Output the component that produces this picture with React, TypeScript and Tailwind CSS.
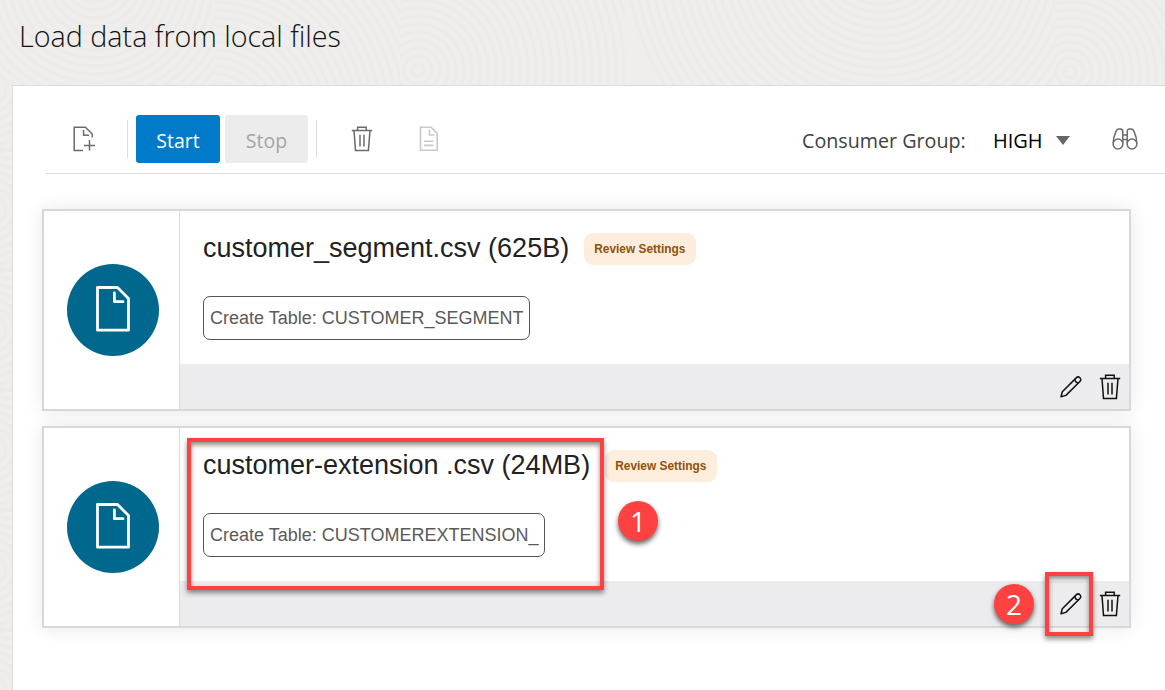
import React from "react";

const ui = "font-['Open_Sans','Noto_Sans',sans-serif]";
const arial = "font-['Liberation_Sans',Arial,sans-serif]";

const rings = [6, 14, 22, 30, 38, 46, 54, 62, 70, 78, 86, 94, 102, 110, 118, 126];

function Texture() {
  const groups = [
    { x: 0, y: 0, w: 215, cx: 95, cy: -20 },
    { x: 215, y: 0, w: 185, cx: 215, cy: 120 },
    { x: 400, y: 0, w: 225, cx: 418, cy: 70 },
    { x: 625, y: 0, w: 430, cx: 880, cy: -50 },
    { x: 1055, y: 0, w: 110, cx: 1070, cy: 72 },
  ];
  return (
    <svg className="absolute inset-0 h-[690px] w-[1165px]" viewBox="0 0 1165 690" fill="none" aria-hidden="true">
      <defs>
        {groups.map((g, i) => (
          <clipPath id={`tile${i}`} key={i}>
            <rect x={g.x} y={g.y} width={g.w} height={85} />
          </clipPath>
        ))}
        <clipPath id="edge">
          <rect x="0" y="85" width="12" height="605" />
        </clipPath>
      </defs>
      {groups.map((g, i) => (
        <g key={i} clipPath={`url(#tile${i})`} stroke="#ecebe9" strokeWidth="3">
          {[...rings, ...rings.map((r) => r + 128)].map((r) => (
            <circle key={r} cx={g.cx} cy={g.cy} r={r} />
          ))}
        </g>
      ))}
      <g clipPath="url(#edge)" stroke="#ecebe9" strokeWidth="3">
        {[90, 210, 330, 450, 570, 690].map((cy) =>
          rings.slice(0, 8).map((r) => <circle key={`${cy}-${r}`} cx="-8" cy={cy} r={r} />)
        )}
      </g>
    </svg>
  );
}

function AddFileIcon() {
  return (
    <svg className="h-[26px] w-[24px]" viewBox="0 0 24 26" fill="none" stroke="#6b6b6b" strokeWidth="1.5">
      <path d="M11 24.5H2.2V1.2H13.4L20.2 8V11.5" />
      <path d="M11.6 4V9.3H17" />
      <path d="M17.5 14V24.6M12 19.4H23" />
    </svg>
  );
}

function TrashIcon({ color }: { color: string }) {
  return (
    <svg className="h-[26px] w-[22px]" viewBox="0 0 22 26" fill="none" stroke={color} strokeWidth="1.5">
      <path d="M0.8 4.5H21.2" />
      <path d="M6.6 4.5V1.3H15.2V4.5" />
      <path d="M3 4.5L4.5 24.4H17.4L19 4.5" />
      <path d="M9 8.8V20.5M13 8.8V20.5" />
    </svg>
  );
}

function LogIcon() {
  return (
    <svg className="h-[26px] w-[20px]" viewBox="0 0 20 26" fill="none" stroke="#c8c8c8" strokeWidth="1.6">
      <path d="M1.5 1.2H12L18.2 7.4V24.3H1.5Z" />
      <path d="M10.4 3.8V9H15.4" />
      <path d="M5 15.3H14.4M5 19.4H14.4" />
    </svg>
  );
}

function BinocularsIcon() {
  return (
    <svg className="h-[22px] w-[26px]" viewBox="0 0 26 22" fill="none" stroke="#6b6b6b" strokeWidth="1.5">
      <circle cx="6" cy="16" r="4.9" />
      <circle cx="20" cy="16" r="4.9" />
      <path d="M1.2 15C1.2 12 2.8 6 4.1 3.1C4.8 1.5 5.5 1.1 6.8 1.1H8.3C10.1 1.1 10.8 2 10.8 3.6V15.2" />
      <path d="M24.8 15C24.8 12 23.2 6 21.9 3.1C21.2 1.5 20.5 1.1 19.2 1.1H17.7C15.9 1.1 15.2 2 15.2 3.6V15.2" />
      <path d="M10.8 7.1H15.2M10.8 11.6H15.2" />
    </svg>
  );
}

function PencilIcon() {
  return (
    <svg className="h-[22px] w-[22px]" viewBox="0 0 22 22" fill="none" stroke="#111" strokeWidth="1.5" strokeLinejoin="round">
      <path d="M1 20.8L2.3 15.8L16.2 1.9C17.3 0.8 18.8 0.7 19.9 1.7C21.1 2.9 21 4.4 19.9 5.5L5.9 19.4Z" />
      <path d="M15 3.2C15 5.4 16.5 6.8 18.7 6.8" />
    </svg>
  );
}

function DocIcon() {
  return (
    <svg className="-mt-0.5 h-[46px] w-[34px]" viewBox="0 0 34 46" fill="none" stroke="#fff" strokeWidth="2.8" strokeLinejoin="round" strokeLinecap="round">
      <path d="M1.5 1.5H21.5L32.5 12.5V44.2H1.5Z" />
      <path d="M18.4 7V15.7H27" />
    </svg>
  );
}

function FileCard({ title, titleClass, table, tableClass }: { title: string; titleClass: string; table: string; tableClass: string }) {
  return (
    <article className={`flex h-[202px] w-[1089px] border-2 border-[#d8d8d9] bg-white shadow-[0_0_18px_rgba(0,0,0,0.09)] ${arial}`}>
      <div className="flex w-[136px] shrink-0 items-center justify-center border-r border-[#dcdcdd] pl-[3px]">
        <div className="flex size-[92px] items-center justify-center rounded-full bg-[#00688c]">
          <DocIcon />
        </div>
      </div>
      <div className="flex min-w-0 flex-1 flex-col">
        <div className="flex flex-1 flex-col items-start pt-[22px] pl-[23px]">
          <div className="flex h-8 items-center">
            <h2 className={`${titleClass} -mt-0.5 text-[27px] leading-8 whitespace-nowrap text-[#222]`}>{title}</h2>
            <span className="flex h-8 w-[112px] items-center justify-center rounded-[9px] bg-[#fdeddc]">
              <span className="scale-x-[0.88] text-[13.5px] leading-4 font-bold whitespace-nowrap text-[#8f520a]">Review Settings</span>
            </span>
          </div>
          <div className={`${tableClass} mt-[31px] flex h-[44px] items-center rounded-[7px] border border-[#555] pl-[6px] text-[18px] whitespace-nowrap text-[#5a5a5a]`}>
            {table}
          </div>
        </div>
        <div className="flex h-[45px] items-center justify-end gap-[17px] bg-[#ececee] pr-[8px]">
          <button aria-label="Edit"><PencilIcon /></button>
          <button aria-label="Delete"><TrashIcon color="#111" /></button>
        </div>
      </div>
    </article>
  );
}

export default function App() {
  return (
    <div className={`relative h-[690px] w-[1165px] overflow-hidden bg-[#efeeec] ${ui}`}>
      <Texture />
      <div className="relative flex h-full flex-col">
        <header className="flex h-[85px] shrink-0 pt-[16px] pl-[19px]">
          <h1 className="h-10 text-[28.7px] leading-10 font-light whitespace-nowrap text-[#111]">Load data from local files</h1>
        </header>
        <main className="ml-3 flex-1 border-t border-l border-[#dcdcdb] bg-white">
          <div className="ml-8 flex h-[88px] items-center border-b border-[#dedede] pt-[18px]">
            <div className="flex h-12 w-full items-center">
              <button className="ml-[27px] w-6" aria-label="Add file"><AddFileIcon /></button>
              <span className="ml-[31px] h-[38px] w-px bg-[#dedede]" />
              <button className="ml-2 h-12 w-[84px] rounded-[3px] bg-[#007ac9] pt-[4px] text-[19.5px] text-white">Start</button>
              <button className="ml-[5px] h-12 w-[83px] rounded-[3px] bg-[#ececec] pt-[4px] text-[19.5px] text-[#a4a4a4]">Stop</button>
              <span className="ml-2 h-[38px] w-px bg-[#dedede]" />
              <button className="ml-[34px]" aria-label="Delete"><TrashIcon color="#6b6b6b" /></button>
              <button className="ml-[46px]" aria-label="Log"><LogIcon /></button>
              <label className="ml-[363px] w-[191px] pt-[4px] text-[19.7px] whitespace-nowrap text-[#404040]">Consumer Group:</label>
              <span className="w-[63px] pt-[4px] text-[20px] text-black">HIGH</span>
              <svg className="mt-[3px] h-[9px] w-[14px]" viewBox="0 0 14 9"><path d="M0 0H14L7 9Z" fill="#666" /></svg>
              <button className="ml-[42px]" aria-label="Search"><BinocularsIcon /></button>
            </div>
          </div>
          <div className="flex flex-col gap-[15px] pt-[35px] pl-[29px]">
            <FileCard title="customer_segment.csv (625B)" titleClass="w-[381px]" table="Create Table: CUSTOMER_SEGMENT" tableClass="w-[327px]" />
            <FileCard title="customer-extension .csv (24MB)" titleClass="w-[402px]" table="Create Table: CUSTOMEREXTENSION_" tableClass="w-[342px]" />
          </div>
        </main>
      </div>
      <div className="pointer-events-none absolute top-[438px] left-[187px] h-[152px] w-[417px] border-4 border-[#ff4141] shadow-[0_3px_5px_rgba(0,0,0,0.45),inset_0_3px_5px_rgba(0,0,0,0.45)]" />
      <div className="pointer-events-none absolute top-[572px] left-[1045px] h-[64px] w-[48px] border-4 border-[#ff4141] shadow-[0_3px_5px_rgba(0,0,0,0.45),inset_0_3px_5px_rgba(0,0,0,0.45)]" />
      <div className="absolute top-[501px] left-[618px] flex size-10 items-center justify-center rounded-full bg-[#ff4141] text-[28px] text-white shadow-[0_3px_5px_rgba(0,0,0,0.6)]">1</div>
      <div className="absolute top-[584px] left-[994px] flex size-10 items-center justify-center rounded-full bg-[#ff4141] text-[28px] text-white shadow-[0_3px_5px_rgba(0,0,0,0.6)]">2</div>
    </div>
  );
}
